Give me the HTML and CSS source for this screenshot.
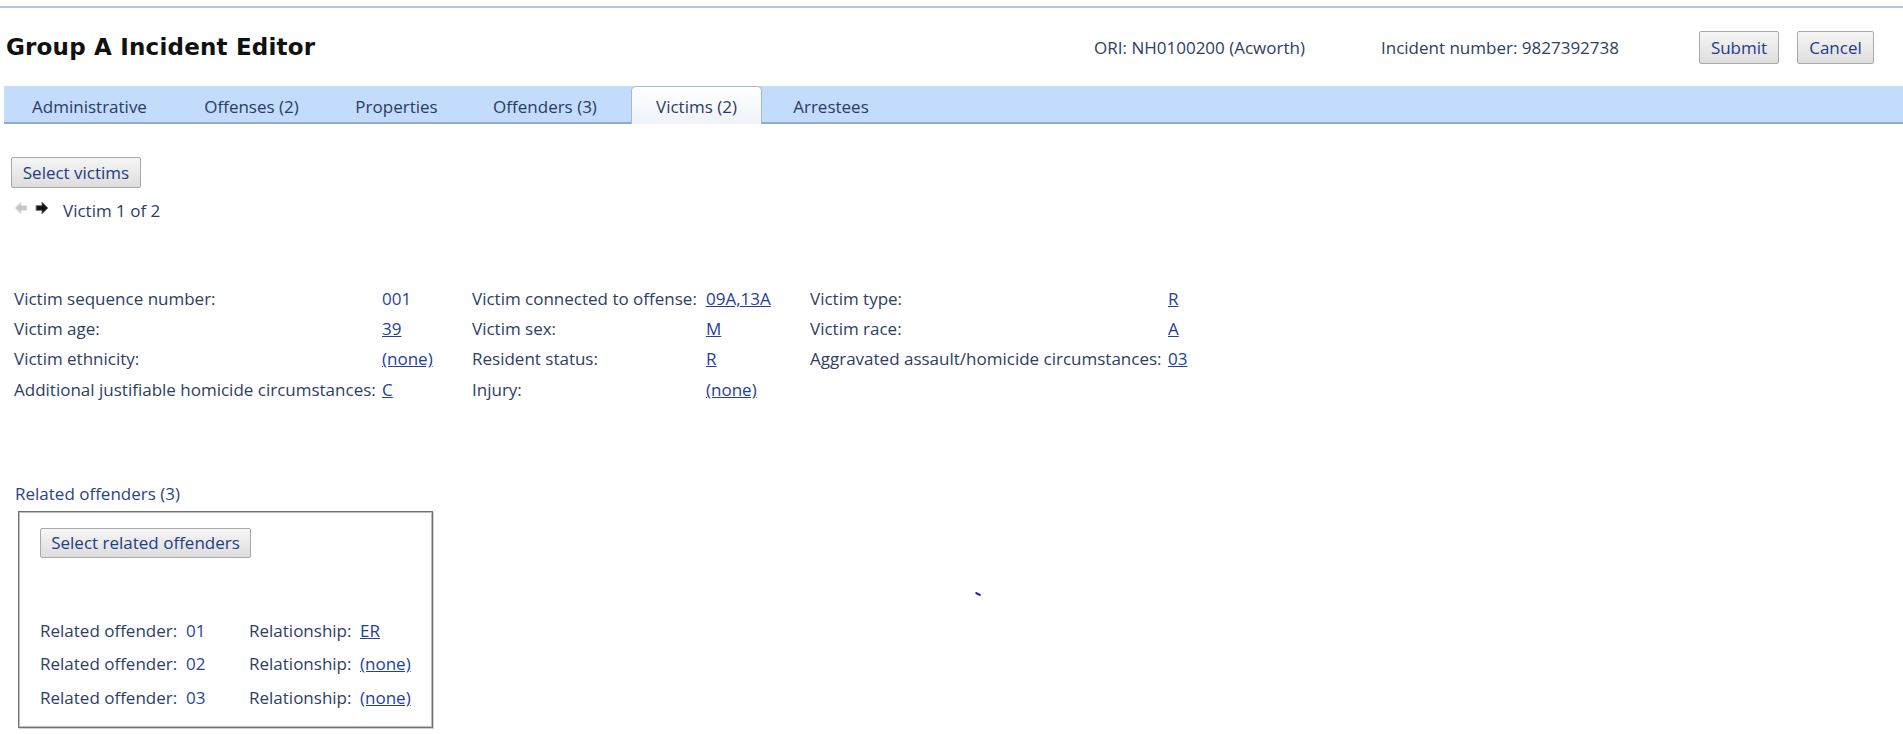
FILE: index.html
```html
<!DOCTYPE html>
<html>
<head>
<meta charset="utf-8">
<title>Group A Incident Editor</title>
<link rel="stylesheet" href="styles.css">
</head>
<body>
<div class="topline"></div>
<header class="header">
  <h1 class="title">Group A Incident Editor</h1>
  <div class="meta">
    <span class="ori">ORI: NH0100200 (Acworth)</span>
    <span class="incident">Incident number: 9827392738</span>
    <button class="btn btn-submit">Submit</button>
    <button class="btn btn-cancel">Cancel</button>
  </div>
</header>
<nav class="tabs">
  <div class="tab t-admin">Administrative</div>
  <div class="tab t-off">Offenses (2)</div>
  <div class="tab t-prop">Properties</div>
  <div class="tab t-offd">Offenders (3)</div>
  <div class="tab t-vic"><span class="tab-active">Victims (2)</span></div>
  <div class="tab t-arr">Arrestees</div>
</nav>
<main class="content">
  <button class="btn btn-select">Select victims</button>
  <div class="pager">
    <svg class="arrow" width="14" height="14" viewBox="0 0 12 12"><polygon points="11,4 6,4 6,1 1,6 6,11 6,8 11,8" fill="#c4c4c4" stroke="#e2e2e2" stroke-width="0.8"/></svg>
    <svg class="arrow arrow-next" width="14" height="14" viewBox="0 0 12 12"><polygon points="1,4 6,4 6,1 11,6 6,11 6,8 1,8" fill="#111" stroke="#666" stroke-width="0.8"/></svg>
    <span class="pager-text">Victim 1 of 2</span>
  </div>

  <div class="fields">
    <span class="lbl">Victim sequence number:</span><span class="val">001</span>
    <span class="lbl">Victim connected to offense:</span><a class="val link" href="#">09A,13A</a>
    <span class="lbl">Victim type:</span><a class="val link" href="#">R</a>

    <span class="lbl">Victim age:</span><a class="val link" href="#">39</a>
    <span class="lbl">Victim sex:</span><a class="val link" href="#">M</a>
    <span class="lbl">Victim race:</span><a class="val link" href="#">A</a>

    <span class="lbl">Victim ethnicity:</span><a class="val link" href="#">(none)</a>
    <span class="lbl">Resident status:</span><a class="val link" href="#">R</a>
    <span class="lbl">Aggravated assault/homicide circumstances:</span><a class="val link" href="#">03</a>

    <span class="lbl">Additional justifiable homicide circumstances:</span><a class="val link" href="#">C</a>
    <span class="lbl">Injury:</span><a class="val link" href="#">(none)</a>
    <span class="lbl"></span><span class="val"></span>
  </div>

  <div class="related-title">Related offenders (3)</div>
  <section class="related-box">
    <button class="btn btn-related">Select related offenders</button>
    <div class="related-rows">
      <span class="lbl">Related offender:</span><span class="val">01</span>
      <span class="lbl">Relationship:</span><a class="val link" href="#">ER</a>
      <span class="lbl">Related offender:</span><span class="val">02</span>
      <span class="lbl">Relationship:</span><a class="val link" href="#">(none)</a>
      <span class="lbl">Related offender:</span><span class="val">03</span>
      <span class="lbl">Relationship:</span><a class="val link" href="#">(none)</a>
    </div>
  </section>
  <span class="spinner-mark"></span>
</main>
</body>
</html>
```

FILE: styles.css
```css
* { box-sizing: border-box; }

body {
  margin: 0;
  background: #ffffff;
  font-family: "Open Sans", "Noto Sans", "Liberation Sans", sans-serif;
  font-size: 17px;
  color: #2d3e64;
  position: relative;
  min-height: 734px;
}

.topline {
  margin-top: 6px;
  height: 2px;
  background: #b3c4e0;
}

.header {
  display: flex;
  align-items: center;
  height: 78px;
  padding: 0 29px 0 6px;
}

.title {
  margin: 0;
  font-family: "DejaVu Sans", "Liberation Sans", sans-serif;
  font-weight: bold;
  font-size: 23px;
  color: #111111;
  letter-spacing: 0.2px;
}

.meta {
  margin-left: auto;
  display: flex;
  align-items: center;
}

.ori { margin-right: 76px; }
.incident { margin-right: 80px; }

.btn {
  font-family: "Open Sans", "Noto Sans", "Liberation Sans", sans-serif;
  font-size: 17px;
  color: #243c86;
  background: linear-gradient(#f6f6f6, #dddddd);
  border: 1px solid #a9a9a9;
  border-radius: 2px;
  padding: 0;
  cursor: pointer;
}

.btn-submit { width: 80px; height: 33px; margin-right: 18px; }
.btn-cancel { width: 77px; height: 33px; }

.tabs {
  display: flex;
  height: 38px;
  margin-left: 4px;
  background: #c3dcfb;
  border-bottom: 2px solid #93a9c9;
}

.tab {
  display: flex;
  align-items: center;
  justify-content: center;
  color: #2b3b63;
  font-size: 17px;
  height: 36px;
  padding-top: 4px;
}

.t-admin { width: 171px; }
.t-off { width: 153px; }
.t-prop { width: 137px; }
.t-offd { width: 160px; }
.t-vic { width: 141px; align-items: flex-end; justify-content: flex-start; padding-top: 0; }
.t-arr { width: 130px; }

.tab-active {
  display: flex;
  align-items: center;
  justify-content: center;
  width: 131px;
  height: 38px;
  margin: 0 4px -2px 6px;
  background: linear-gradient(#ffffff, #eef3f9);
  border: 1px solid #a5b8d3;
  border-bottom: none;
  border-radius: 5px 5px 0 0;
  padding-top: 2px;
}

.content {
  display: flex;
  flex-direction: column;
  align-items: flex-start;
}

.btn-select {
  margin: 33px 0 0 11px;
  width: 130px;
  height: 31px;
}

.pager {
  display: flex;
  align-items: center;
  height: 22px;
  margin-top: 11px;
  padding-left: 14px;
}

.arrow { display: block; margin-top: -5px; }
.arrow-next { margin-left: 7px; }
.pager-text { margin-left: 14px; }

.fields {
  display: grid;
  grid-template-columns: 368px 90px 234px 104px 358px auto;
  grid-auto-rows: 30.4px;
  align-items: center;
  margin: 62px 0 0 14px;
  white-space: nowrap;
}

.val { color: #2c4595; }
.link { color: #22409c; text-decoration: underline; }

.related-title {
  margin: 78px 0 0 15px;
  line-height: 22px;
  color: #2b4486;
}

.related-box {
  margin: 6px 0 0 18px;
  width: 415px;
  height: 217px;
  border: 1px solid #737373;
  box-shadow: inset 0 0 0 1px #bdbdbd, 1px 1px 0 #d0d0d0;
  padding: 16px 0 0 21px;
}

.btn-related {
  display: block;
  width: 211px;
  height: 30px;
}

.related-rows {
  display: grid;
  grid-template-columns: 146px 63px 111px auto;
  grid-auto-rows: 33.5px;
  align-items: center;
  margin-top: 56px;
  white-space: nowrap;
}

.related-rows .val { color: #2c4595; }
.related-rows .link { color: #22409c; }

.spinner-mark {
  position: absolute;
  left: 975px;
  top: 593px;
  width: 6px;
  height: 2px;
  background: #1414c8;
  border-radius: 1px;
  transform: rotate(28deg);
}
```
